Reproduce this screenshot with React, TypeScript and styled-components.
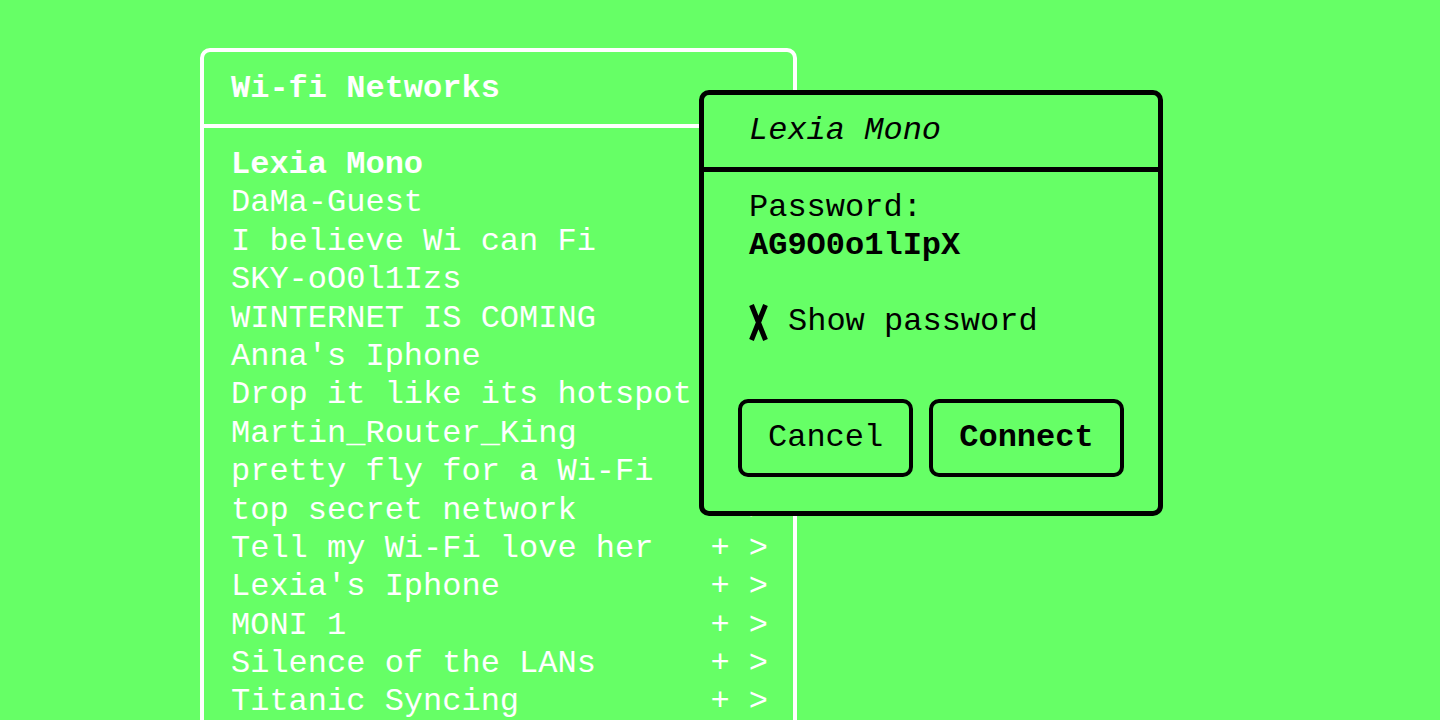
import styled, { createGlobalStyle } from "styled-components";

const networks = [
  "Lexia Mono",
  "DaMa-Guest",
  "I believe Wi can Fi",
  "SKY-oO0l1Izs",
  "WINTERNET IS COMING",
  "Anna's Iphone",
  "Drop it like its hotspot",
  "Martin_Router_King",
  "pretty fly for a Wi-Fi",
  "top secret network",
  "Tell my Wi-Fi love her",
  "Lexia's Iphone",
  "MONI 1",
  "Silence of the LANs",
  "Titanic Syncing",
];

const selected = "Lexia Mono";

export default function App() {
  return (
    <>
      <GlobalStyle />
      <Page>
        <Stage>
          <Panel>
            <PanelHeader>Wi-fi Networks</PanelHeader>
            <NetworkList>
              {networks.map((name, i) => (
                <NetworkRow key={name + i} $active={name === selected && i === 0}>
                  <span>{name}</span>
                  <RowActions>+ &gt;</RowActions>
                </NetworkRow>
              ))}
            </NetworkList>
          </Panel>

          <Dialog>
            <DialogHeader>Lexia Mono</DialogHeader>
            <DialogBody>
              <Field>
                <Label>Password:</Label>
                <PasswordValue>AG9O0o1lIpX</PasswordValue>
              </Field>
              <CheckRow>
                <CheckMark viewBox="0 0 19 39">
                  <path d="M2.5 2 L16.5 37 M16.5 2 L2.5 37" />
                </CheckMark>
                <span>Show password</span>
              </CheckRow>
              <ButtonRow>
                <DialogButton>Cancel</DialogButton>
                <DialogButton $primary>Connect</DialogButton>
              </ButtonRow>
            </DialogBody>
          </Dialog>
        </Stage>
      </Page>
    </>
  );
}

const GlobalStyle = createGlobalStyle`
  html, body {
    margin: 0;
    background: #66ff66;
    overflow: hidden;
  }

  body {
    font-family: "Liberation Mono", "DejaVu Sans Mono", monospace;
    font-size: 32px;
    line-height: 1.2;
  }
`;

const Page = styled.main`
  padding: 48px 0 0 200px;
  height: 720px;
  box-sizing: border-box;
`;

const Stage = styled.div`
  position: relative;
  width: 963px;
`;

const Panel = styled.section`
  width: 597px;
  box-sizing: border-box;
  border: 4px solid #fff;
  border-radius: 10px;
  color: #fff;
`;

const PanelHeader = styled.h1`
  margin: 0;
  height: 70px;
  display: flex;
  align-items: center;
  padding: 2px 0 0 27px;
  border-bottom: 4px solid #fff;
  font-size: 32px;
  font-weight: 700;
`;

const NetworkList = styled.ul`
  list-style: none;
  margin: 0;
  padding: 18px 25px 24px 27px;
`;

const NetworkRow = styled.li<{ $active?: boolean }>`
  display: flex;
  justify-content: space-between;
  white-space: pre;
  font-weight: ${({ $active }) => ($active ? 700 : 400)};
`;

const RowActions = styled.span`
  font-weight: 400;
`;

const Dialog = styled.div`
  position: absolute;
  left: 499px;
  top: 42px;
  width: 464px;
  box-sizing: border-box;
  border: 5px solid #000;
  border-radius: 10px;
  background: #66ff66;
  color: #000;
`;

const DialogHeader = styled.h2`
  margin: 0;
  height: 72px;
  display: flex;
  align-items: center;
  padding-left: 45px;
  border-bottom: 5px solid #000;
  font-size: 32px;
  font-weight: 400;
  font-style: italic;
`;

const DialogBody = styled.div`
  padding: 17px 34px 34px;
`;

const Field = styled.div`
  display: flex;
  flex-direction: column;
  padding-left: 11px;
`;

const Label = styled.span``;

const PasswordValue = styled.span`
  font-weight: 700;
`;

const CheckRow = styled.label`
  display: flex;
  align-items: center;
  gap: 20px;
  margin-top: 37px;
  padding-left: 11px;
  white-space: pre;
`;

const CheckMark = styled.svg`
  width: 19px;
  height: 39px;
  flex-shrink: 0;

  path {
    fill: none;
    stroke: #000;
    stroke-width: 5;
  }
`;

const ButtonRow = styled.div`
  display: flex;
  gap: 16px;
  margin-top: 57px;
`;

const DialogButton = styled.button<{ $primary?: boolean }>`
  height: 78px;
  padding: 0 26px;
  border: 4.5px solid #000;
  border-radius: 10px;
  background: transparent;
  color: #000;
  font-family: inherit;
  font-size: 32px;
  font-weight: ${({ $primary }) => ($primary ? 700 : 400)};
`;
